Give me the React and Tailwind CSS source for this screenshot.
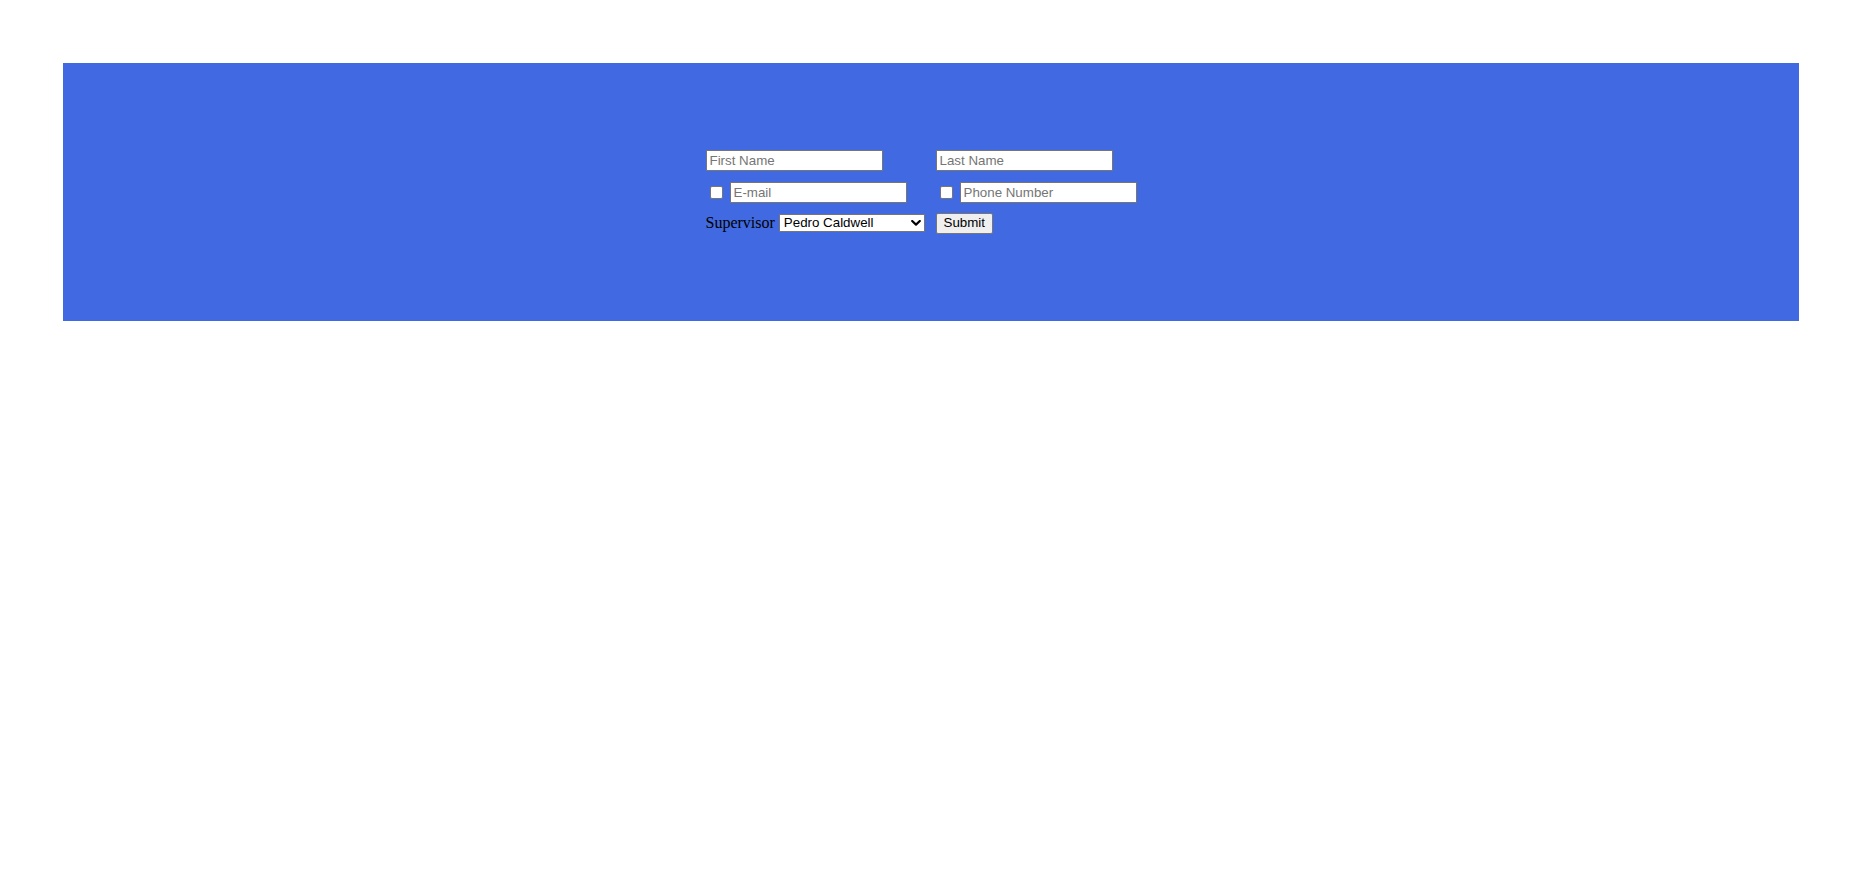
const inputCls =
  "w-[177px] h-[21px] bg-white border border-[#767676] px-[3px] text-[13.333px] text-black placeholder:text-[#757575] outline-none";

const Checkbox = () => (
  <input
    type="checkbox"
    className="appearance-none w-[13px] h-[13px] ml-[4px] mr-[7px] bg-white border border-[#767676] rounded-[2px] shrink-0"
  />
);

const App = () => {
  return (
    <div className="min-h-[892px] bg-white pt-[63px] font-['Liberation_Sans',Arial,sans-serif]">
      <div className="mx-[63px] h-[258px] bg-[#4169e1] flex items-center justify-center">
        <form className="mr-[2px] grid grid-cols-[219px_219px] gap-x-[11px] gap-y-[11px]">
          <div className="flex items-center h-[21px]">
            <input className={inputCls} type="text" placeholder="First Name" />
          </div>
          <div className="flex items-center h-[21px]">
            <input className={inputCls} type="text" placeholder="Last Name" />
          </div>

          <div className="flex items-center h-[21px]">
            <Checkbox />
            <input className={inputCls} type="email" placeholder="E-mail" />
          </div>
          <div className="flex items-center h-[21px]">
            <Checkbox />
            <input className={inputCls} type="tel" placeholder="Phone Number" />
          </div>

          <div className="flex items-start h-[21px]">
            <label className="block text-[16px] text-black font-['Liberation_Serif','Times_New_Roman',serif] mr-[4px] leading-[18px]">
              Supervisor
            </label>
            <div className="relative h-[18px]">
              <select className="block appearance-none w-[146px] h-[18px] bg-white border border-[#767676] pl-[4px] pr-[18px] text-[13.333px] leading-[16px] text-black outline-none">
                <option>Pedro Caldwell</option>
                <option>Maria Lopez</option>
                <option>James Carter</option>
              </select>
              <svg
                className="absolute right-[4px] top-[6px] w-[10px] h-[6px] pointer-events-none"
                viewBox="0 0 10 6"
                fill="none"
              >
                <polyline
                  points="1.2,1 5,4.6 8.8,1"
                  stroke="#000"
                  strokeWidth="2.2"
                  strokeLinecap="round"
                  strokeLinejoin="round"
                />
              </svg>
            </div>
          </div>
          <div className="flex items-start h-[21px]">
            <button
              type="button"
              className="-mt-[1px] h-[21px] px-[7px] bg-[#efefef] border border-[#767676] rounded-[2px] text-[13.333px] text-black leading-none"
            >
              Submit
            </button>
          </div>
        </form>
      </div>
    </div>
  );
};

export default App;
